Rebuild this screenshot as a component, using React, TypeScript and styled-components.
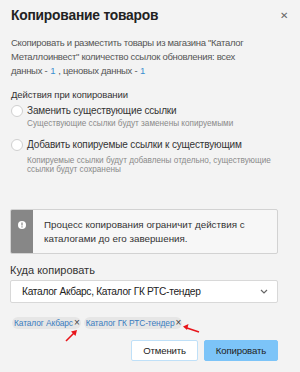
import styled, { createGlobalStyle } from "styled-components";

const GlobalStyle = createGlobalStyle`
  html, body {
    margin: 0;
    padding: 0;
    background: #f3f3f3;
    font-family: "Liberation Sans", Arial, sans-serif;
    color: #333;
  }
`;

const Dialog = styled.div`
  position: relative;
  width: 300px;
  height: 372px;
  box-sizing: border-box;
  padding: 6px 22px 0 10px;
  background: #f3f3f3;
  overflow: hidden;
`;

const Header = styled.div`
  display: flex;
  align-items: center;
  justify-content: space-between;
  height: 20px;
  margin-right: -12px;
`;

const Title = styled.h1`
  margin: 0 0 0 1px;
  font-size: 13.8px;
  letter-spacing: -0.2px;
  font-weight: bold;
  color: #222;
  line-height: 20px;
`;

const Close = styled.span`
  font-size: 10px;
  color: #666;
  line-height: 1;
  margin-right: 2px;
`;

const Description = styled.p`
  max-width: 254px;
  margin: 10px 0 0 1px;
  font-size: 9.5px;
  letter-spacing: -0.3px;
  line-height: 14px;
  color: #555;
`;

const Num = styled.span`
  color: #3a8fd0;
  letter-spacing: 0;
  margin: 0 0.5px;
`;

const SectionLabel = styled.div`
  margin: 10px 0 0 1px;
  font-size: 9.5px;
  letter-spacing: -0.1px;
  line-height: 14px;
  color: #333;
`;

const Option = styled.div<{ $gap: number }>`
  display: grid;
  grid-template-columns: 17px 1fr;
  margin-top: ${(p) => p.$gap}px;
  margin-right: -8px;
`;

const Radio = styled.span`
  width: 10px;
  height: 10px;
  margin: 2px 0 0 1px;
  border: 1px solid #d0d0d0;
  border-radius: 50%;
  background: #fff;
`;

const OptionTitle = styled.div`
  font-size: 10px;
  letter-spacing: -0.15px;
  line-height: 15px;
  color: #333;
`;

const OptionHint = styled.div<{ $gap: number }>`
  margin-top: ${(p) => p.$gap}px;
  font-size: 8.2px;
  line-height: 9.5px;
  color: #8a8a8a;
`;

const Notice = styled.div`
  display: flex;
  margin-top: 34px;
  height: 45px;
  box-sizing: border-box;
  border: 1px solid #d2d2d2;
  border-radius: 2px;
  background: #f7f7f7;
  overflow: hidden;
`;

const NoticeStrip = styled.div`
  width: 22px;
  flex-shrink: 0;
  background: #878787;
  display: flex;
  justify-content: center;
  padding-top: 11px;
  box-sizing: border-box;
`;

const NoticeText = styled.div`
  padding: 8px 20px 0 11px;
  font-size: 9.8px;
  line-height: 14px;
  color: #333;
`;

const FieldLabel = styled.div`
  margin-top: 9px;
  font-size: 11px;
  line-height: 14px;
  color: #333;
`;

const Select = styled.div`
  display: flex;
  align-items: center;
  justify-content: space-between;
  margin-top: 3px;
  height: 21px;
  padding: 0 9px 0 11px;
  background: #fff;
  border: 1px solid #d8d8d8;
  border-radius: 2px;
  font-size: 10.2px;
  letter-spacing: -0.3px;
  color: #222;
`;

const Tags = styled.div`
  display: flex;
  gap: 3px;
  margin-top: 14px;
  margin-left: 2px;
`;

const Tag = styled.span`
  display: inline-flex;
  align-items: center;
  gap: 1px;
  height: 12px;
  padding: 0 1px 0 2px;
  border-radius: 6px;
  background: #e6e6e6;
  font-size: 8.4px;
  letter-spacing: -0.1px;
  color: #3a7cbf;
`;

const TagX = styled.span`
  color: #444;
  font-size: 10px;
  line-height: 1;
`;

const Actions = styled.div`
  display: flex;
  justify-content: flex-end;
  gap: 6px;
  margin-top: 11px;
`;

const Button = styled.button<{ $primary?: boolean }>`
  height: 21px;
  padding: 0 11px;
  border-radius: 2px;
  border: 1px solid ${(p) => (p.$primary ? "#7cc4f8" : "#bfe0f8")};
  background: ${(p) => (p.$primary ? "#7cc4f8" : "#fff")};
  font-family: "Liberation Sans", Arial, sans-serif;
  font-size: 9.6px;
  letter-spacing: -0.15px;
  color: #222;
`;

const Arrows = styled.svg`
  position: absolute;
  left: 0;
  top: 0;
  pointer-events: none;
`;

export default function App() {
  return (
    <>
      <GlobalStyle />
      <Dialog>
        <Header>
          <Title>Копирование товаров</Title>
          <Close>✕</Close>
        </Header>
        <Description>
          Скопировать и разместить товары из магазина "Каталог Металлоинвест" количество ссылок
          обновления: всех данных - <Num>1</Num> , ценовых данных - <Num>1</Num>
        </Description>
        <SectionLabel>Действия при копировании</SectionLabel>
        <Option $gap={1}>
          <Radio />
          <div>
            <OptionTitle>Заменить существующие ссылки</OptionTitle>
            <OptionHint $gap={1}>Существующие ссылки будут заменены копируемыми</OptionHint>
          </div>
        </Option>
        <Option $gap={8}>
          <Radio />
          <div>
            <OptionTitle>Добавить копируемые ссылки к существующим</OptionTitle>
            <OptionHint $gap={4}>
              Копируемые ссылки будут добавлены отдельно, существующие ссылки будут сохранены
            </OptionHint>
          </div>
        </Option>
        <Notice>
          <NoticeStrip>
            <svg width="8" height="8" viewBox="0 0 8 8">
              <circle cx="4" cy="4" r="4" fill="#fff" />
              <rect x="3.4" y="1.5" width="1.2" height="3" fill="#878787" />
              <rect x="3.4" y="5.3" width="1.2" height="1.2" fill="#878787" />
            </svg>
          </NoticeStrip>
          <NoticeText>
            Процесс копирования ограничит действия с каталогами до его завершения.
          </NoticeText>
        </Notice>
        <FieldLabel>Куда копировать</FieldLabel>
        <Select>
          <span>Каталог Акбарс, Каталог ГК РТС-тендер</span>
          <svg width="8" height="5" viewBox="0 0 8 5">
            <path d="M1 1l3 3 3-3" fill="none" stroke="#666" strokeWidth="1.2" />
          </svg>
        </Select>
        <Tags>
          <Tag>
            Каталог Акбарс<TagX>×</TagX>
          </Tag>
          <Tag>
            Каталог ГК РТС-тендер<TagX>×</TagX>
          </Tag>
        </Tags>
        <Actions>
          <Button>Отменить</Button>
          <Button $primary>Копировать</Button>
        </Actions>
        <Arrows width="300" height="372" viewBox="0 0 300 372">
          <path d="M66 341l8-8" stroke="#e8141a" strokeWidth="1.6" />
          <path d="M77 330l-6 1.5 4.5 4.5z" fill="#e8141a" />
          <path d="M199 332l-12-4" stroke="#e8141a" strokeWidth="1.6" />
          <path d="M183 326.5l5.5-2.5 -1.5 6z" fill="#e8141a" />
        </Arrows>
      </Dialog>
    </>
  );
}
